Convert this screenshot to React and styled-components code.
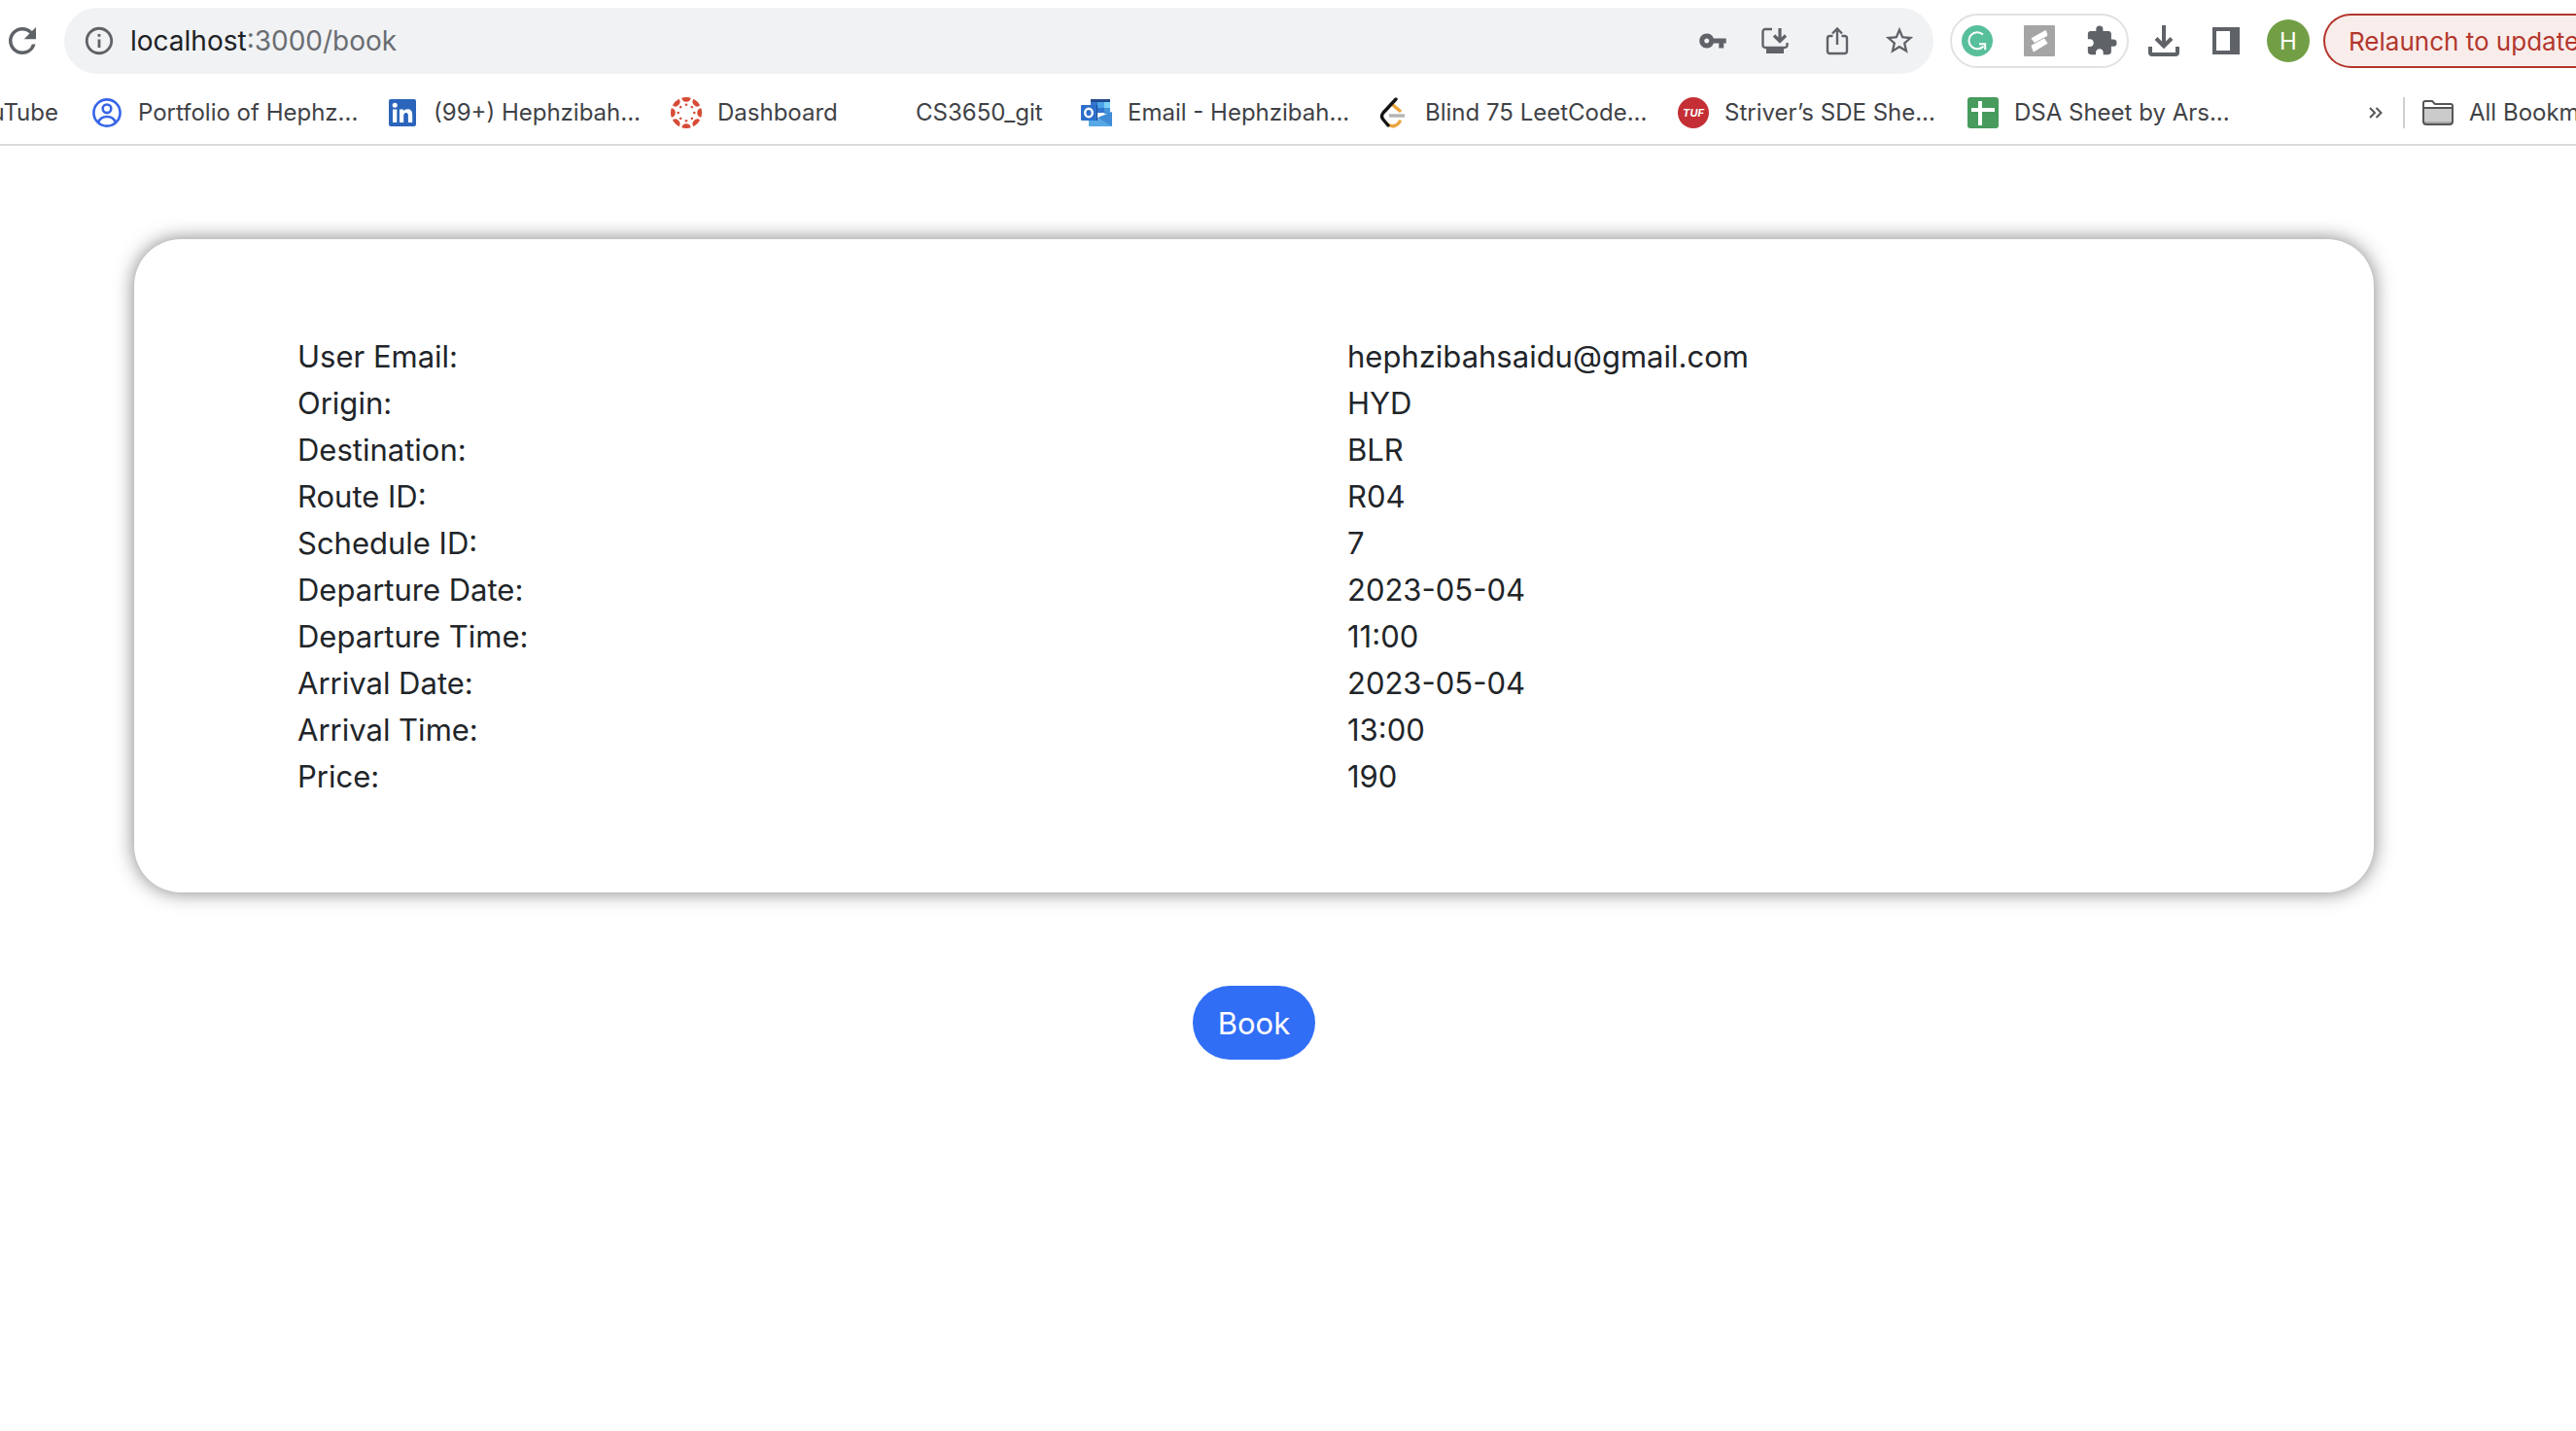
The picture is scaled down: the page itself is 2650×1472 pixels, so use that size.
import React from "react";
import styled, { createGlobalStyle } from "styled-components";
import {
  MdRefresh,
  MdInfoOutline,
  MdVpnKey,
  MdStarBorder,
  MdExtension,
} from "react-icons/md";

const GlobalStyle = createGlobalStyle`
  *, *::before, *::after { box-sizing: border-box; }
  body {
    margin: 0;
    background: #ffffff;
    color: #212529;
    font-family: Inter, "Liberation Sans", sans-serif;
    overflow-x: hidden;
  }
  button, input { font: inherit; }
  svg { display: block; flex: none; }
`;

const BrowserChrome = styled.header`
  border-bottom: 2px solid #dadbdc;
  overflow: hidden;
`;

const Toolbar = styled.div`
  display: flex;
  align-items: center;
  height: 84px;
  color: #5f6368;
`;

const IconButton = styled.button`
  display: flex;
  align-items: center;
  justify-content: center;
  flex: none;
  width: ${(p) => p.$width || 64}px;
  height: 56px;
  padding: 0;
  border: 0;
  background: transparent;
  color: inherit;
`;

const AddressBar = styled.div`
  display: flex;
  align-items: center;
  flex: 1;
  height: 68px;
  margin-left: 20px;
  padding: 0 3px 0 4px;
  border-radius: 34px;
  background: #f1f2f4;
`;

const Host = styled.label`
  color: #202124;
  font-size: 28px;
`;

const PathInput = styled.input`
  flex: 1;
  min-width: 0;
  padding: 0;
  border: 0;
  outline: 0;
  background: transparent;
  color: #6a6d72;
  font-size: 28px;
`;

const ExtensionGroup = styled.div`
  display: flex;
  align-items: center;
  justify-content: center;
  flex: none;
  width: 184px;
  height: 56px;
  margin: 0 4px 0 17px;
  border: 2px solid #e1e2e3;
  border-radius: 28px;
`;

const Avatar = styled.button`
  flex: none;
  width: 44px;
  height: 44px;
  margin: 0 14px 0 10px;
  padding: 0;
  border: 0;
  border-radius: 50%;
  background: #729f45;
  color: #ffffff;
  font-size: 24px;
`;

const RelaunchButton = styled.button`
  flex: none;
  width: 260px;
  height: 56px;
  padding: 0 0 0 24px;
  border: 2px solid #b3372d;
  border-right: 0;
  border-radius: 28px 0 0 28px;
  background: #f9edec;
  color: #b3372d;
  font-size: 26px;
  text-align: left;
  white-space: nowrap;
  overflow: hidden;
`;

const BookmarkBar = styled.nav`
  display: flex;
  align-items: center;
  height: 64px;
  color: #3f4246;
  font-size: 24px;
  line-height: 30px;
  white-space: nowrap;
`;

const Bookmark = styled.a`
  display: flex;
  align-items: center;
  flex: none;
  gap: 16px;
  width: ${(p) => p.$width}px;
  color: inherit;
  text-decoration: none;
`;

const CutBookmark = styled(Bookmark)`
  justify-content: flex-end;
  padding-right: 34px;
  overflow: hidden;
`;

const IconSlot = styled.span`
  display: flex;
  align-items: center;
  justify-content: center;
  flex: none;
  width: 32px;
  height: 32px;
`;

const Spacer = styled.div`
  flex: 1;
`;

const OverflowButton = styled(IconButton)`
  height: 32px;
  color: #54575b;
`;

const Divider = styled.span`
  flex: none;
  width: 2px;
  height: 32px;
  margin-right: 18px;
  background: #cfd0d2;
`;

const Page = styled.main`
  display: flex;
  flex-direction: column;
  align-items: center;
  gap: 96px;
  padding: 96px 208px 96px 138px;
`;

const Card = styled.section`
  width: 100%;
  padding: 97px 72px 95px;
  border-radius: 48px;
  background: #ffffff;
  box-shadow: 0 0 20px rgba(0, 0, 0, 0.5);
`;

const DetailTable = styled.table`
  width: 100%;
  table-layout: fixed;
  border-collapse: collapse;
  font-size: 31px;
  line-height: 48px;
  text-align: left;
`;

const LabelCell = styled.th`
  padding: 0 0 0 96px;
  font-weight: 400;
`;

const ValueCell = styled.td`
  padding: 0 0 0 96px;
`;

const BookButton = styled.button`
  height: 76px;
  padding: 0 26px;
  border: 0;
  border-radius: 38px;
  background: #316ef6;
  color: #ffffff;
  font-size: 31px;
`;

const InstallIcon = () => (
  <svg width="28" height="28" viewBox="0 0 28 28" fill="none" stroke="currentColor">
    <path d="M11 2H4a2.500 2.500 0 0 0-2.500 2.500v14A2.500 2.500 0 0 0 4 21h20a2.500 2.500 0 0 0 2.500-2.500V16" strokeWidth="2.400" />
    <path d="M19 1v13M13 8.500l6 6 6-6" strokeWidth="3.200" />
    <path d="M5 22h18v5H5z" fill="currentColor" stroke="none" />
  </svg>
);

const ShareIcon = () => (
  <svg width="24" height="30" viewBox="0 0 24 30" fill="none" stroke="currentColor" strokeWidth="2.4">
    <path d="M7.500 10H4.500a2.500 2.500 0 0 0-2.500 2.500v13A2.500 2.500 0 0 0 4.500 28h15a2.500 2.500 0 0 0 2.500-2.500v-13A2.500 2.500 0 0 0 19.500 10h-3" />
    <path d="M12 19V2.500M7 7.500l5-5 5 5" />
  </svg>
);

const GrammarlyIcon = () => (
  <svg width="32" height="32" viewBox="0 0 32 32" fill="none" stroke="#fff" strokeWidth="2">
    <circle cx="16" cy="16" r="16" fill="#58bf9b" stroke="none" />
    <path d="M22 9.500A8.600 8.600 0 1 0 22.500 21.500" />
    <path d="M18 19.300h6.200v6" />
  </svg>
);

const ScribeIcon = () => (
  <svg width="32" height="32" viewBox="0 0 32 32">
    <rect width="32" height="32" rx="1" fill="#a5a5a5" />
    <path d="M8 13.500L22.500 5.500 24 10.500 11 17.500zM8 21L21 14l3 4.500L10 27z" fill="#fff" stroke="#fff" strokeLinejoin="round" />
  </svg>
);

const DownloadIcon = () => (
  <svg width="32" height="32" viewBox="0 0 32 32" fill="none" stroke="currentColor" strokeWidth="4">
    <path d="M16 0v21M8 13.500l8 8 8-8" />
    <path d="M2 22v6a2 2 0 0 0 2 2h24a2 2 0 0 0 2-2v-6" />
  </svg>
);

const SidePanelIcon = () => (
  <svg width="28" height="28" viewBox="0 0 28 28">
    <path fillRule="evenodd" d="M0 0h28v28H0zM4 4v20h14V4z" fill="currentColor" />
  </svg>
);

const ProfileIcon = () => (
  <svg width="32" height="32" viewBox="0 0 32 32" fill="none" stroke="#3765e8" strokeWidth="2.600">
    <circle cx="16" cy="16" r="13.600" />
    <circle cx="16" cy="11.800" r="4.300" />
    <path d="M7 26c1.500-4 5-6 9-6s7.500 2 9 6" />
  </svg>
);

const LinkedInIcon = () => (
  <svg width="28" height="28" viewBox="0 0 28 28">
    <rect width="28" height="28" rx="2" fill="#2b65bb" />
    <circle cx="6.200" cy="6.300" r="2.500" fill="#fff" />
    <path d="M4 10.500h4.300V24H4zM11 10.500h4.100v1.900c.8-1.400 2.300-2.200 4.200-2.200 3.600 0 4.900 2.200 4.900 6V24h-4.300v-7c0-1.900-.5-3.100-2.200-3.100-1.800 0-2.500 1.300-2.500 3.200V24H11z" fill="#fff" />
  </svg>
);

const rays = [0, 45, 90, 135, 180, 225, 270, 315];

const CanvasIcon = () => (
  <svg width="32" height="32" viewBox="0 0 32 32" fill="#d64b36">
    {rays.map((angle) => (
      <g key={angle} transform={`rotate(${angle} 16 16)`}>
        <path d="M11.300.7a16 16 0 0 1 9.400 0 4.750 4.750 0 0 1-9.400 0z" />
        <circle cx="16" cy="7.700" r="1.300" />
      </g>
    ))}
  </svg>
);

const OutlookIcon = () => (
  <svg width="32" height="32" viewBox="0 0 32 32">
    <path d="M10 2h20v14H10z" fill="#3276cf" />
    <path d="M10 2h20v3H10z" fill="#244b8f" />
    <path d="M17 5h7v6h-7z" fill="#4ba3e8" />
    <path d="M24 5h6v6h-6z" fill="#7bd2f9" />
    <path d="M24 11h6v6h-6z" fill="#4695dc" />
    <path d="M8 16l12 7 12-8v15H8z" fill="#55a9e7" />
    <path d="M17 21l15-6v15z" fill="#3f8bd5" />
    <path d="M17 21l15 9H8z" fill="#56a8e5" />
    <path d="M8 8h9v16H8z" fill="#1d4c91" />
    <rect y="8" width="16" height="16" rx="1" fill="#2d6fca" />
    <ellipse cx="8" cy="16" rx="3.800" ry="4.300" fill="none" stroke="#fff" strokeWidth="2.400" />
  </svg>
);

const LeetCodeIcon = () => (
  <svg width="32" height="32" viewBox="0 0 32 32" fill="none" strokeWidth="3.400">
    <path d="M15 8l7 6M22 25c-3 5-8 6-12 3" stroke="#eba43b" strokeLinecap="round" />
    <path d="M11 19h16" stroke="#b3b3b3" />
    <path d="M18 2L5 16q-3 3.500 0 7l5 6" stroke="#141414" strokeLinecap="round" />
  </svg>
);

const TufIcon = () => (
  <svg width="32" height="32" viewBox="0 0 32 32">
    <circle cx="16" cy="16" r="16" fill="#c42f35" />
    <text x="16" y="20" fill="#fff" fontSize="11" fontWeight="700" fontStyle="italic" textAnchor="middle">
      TUF
    </text>
  </svg>
);

const SheetIcon = () => (
  <svg width="32" height="32" viewBox="0 0 32 32">
    <rect width="32" height="32" rx="3" fill="#469b5d" />
    <path d="M4 11h24v4H4zM11 4h4v25h-4z" fill="#fff" />
  </svg>
);

const ChevronsIcon = () => (
  <svg width="14" height="14" viewBox="0 0 14 14" fill="none" stroke="currentColor" strokeWidth="2">
    <path d="M1 2l5 5-5 5M7.500 2l5 5-5 5" />
  </svg>
);

const FolderIcon = () => (
  <svg width="32" height="26" viewBox="0 0 32 26">
    <path d="M1 22V3q0-2 2-2h7l3 3h16q2 0 2 2v16q0 3-3 3H4q-3 0-3-3z" fill="#cbcbcb" />
    <path d="M2 2h8l3 3h17v2H2z" fill="#fff" />
    <path d="M2 22h28v2H2z" fill="#a8a8a8" />
    <path d="M1 8h30M1 22V3q0-2 2-2h7l3 3h16q2 0 2 2v16q0 3-3 3H4q-3 0-3-3z" fill="none" stroke="#555" strokeWidth="2" />
  </svg>
);

const bookmarks = [
  { label: "Portfolio of Hephz...", Icon: ProfileIcon, width: 304 },
  { label: "(99+) Hephzibah...", Icon: LinkedInIcon, width: 292 },
  { label: "Dashboard", Icon: CanvasIcon, width: 204 },
  { label: "CS3650_git", Icon: null, width: 218 },
  { label: "Email - Hephzibah...", Icon: OutlookIcon, width: 306 },
  { label: "Blind 75 LeetCode...", Icon: LeetCodeIcon, width: 308 },
  { label: "Striver’s SDE She...", Icon: TufIcon, width: 298 },
  { label: "DSA Sheet by Ars...", Icon: SheetIcon, width: 298 },
];

const details = [
  ["User Email:", "hephzibahsaidu@gmail.com"],
  ["Origin:", "HYD"],
  ["Destination:", "BLR"],
  ["Route ID:", "R04"],
  ["Schedule ID:", "7"],
  ["Departure Date:", "2023-05-04"],
  ["Departure Time:", "11:00"],
  ["Arrival Date:", "2023-05-04"],
  ["Arrival Time:", "13:00"],
  ["Price:", "190"],
];

export default function App() {
  return (
    <>
      <GlobalStyle />
      <BrowserChrome>
        <Toolbar>
          <IconButton $width={46} aria-label="Reload">
            <MdRefresh size={42} />
          </IconButton>
          <AddressBar>
            <IconButton aria-label="Site information">
              <MdInfoOutline size={34} />
            </IconButton>
            <Host htmlFor="path">localhost</Host>
            <PathInput id="path" defaultValue=":3000/book" />
            <IconButton aria-label="Passwords">
              <MdVpnKey size={30} />
            </IconButton>
            <IconButton aria-label="Install app">
              <InstallIcon />
            </IconButton>
            <IconButton aria-label="Share">
              <ShareIcon />
            </IconButton>
            <IconButton aria-label="Bookmark this page">
              <MdStarBorder size={34} />
            </IconButton>
          </AddressBar>
          <ExtensionGroup>
            <IconButton aria-label="Grammarly">
              <GrammarlyIcon />
            </IconButton>
            <IconButton aria-label="Scribe">
              <ScribeIcon />
            </IconButton>
            <IconButton aria-label="Extensions">
              <MdExtension size={34} />
            </IconButton>
          </ExtensionGroup>
          <IconButton aria-label="Downloads">
            <DownloadIcon />
          </IconButton>
          <IconButton aria-label="Side panel">
            <SidePanelIcon />
          </IconButton>
          <Avatar>H</Avatar>
          <RelaunchButton>Relaunch to update</RelaunchButton>
        </Toolbar>
        <BookmarkBar>
          <CutBookmark href="#youtube" $width={94}>
            uTube
          </CutBookmark>
          {bookmarks.map(({ label, Icon, width }) => (
            <Bookmark key={label} href="#bookmark" $width={width}>
              <IconSlot>{Icon && <Icon />}</IconSlot>
              {label}
            </Bookmark>
          ))}
          <Spacer />
          <OverflowButton $width={56} aria-label="More bookmarks">
            <ChevronsIcon />
          </OverflowButton>
          <Divider />
          <Bookmark href="#all" $width={158}>
            <FolderIcon />
            All Bookmarks
          </Bookmark>
        </BookmarkBar>
      </BrowserChrome>
      <Page>
        <Card>
          <DetailTable>
            <tbody>
              {details.map(([label, value]) => (
                <tr key={label}>
                  <LabelCell scope="row">{label}</LabelCell>
                  <ValueCell>{value}</ValueCell>
                </tr>
              ))}
            </tbody>
          </DetailTable>
        </Card>
        <BookButton>Book</BookButton>
      </Page>
    </>
  );
}
